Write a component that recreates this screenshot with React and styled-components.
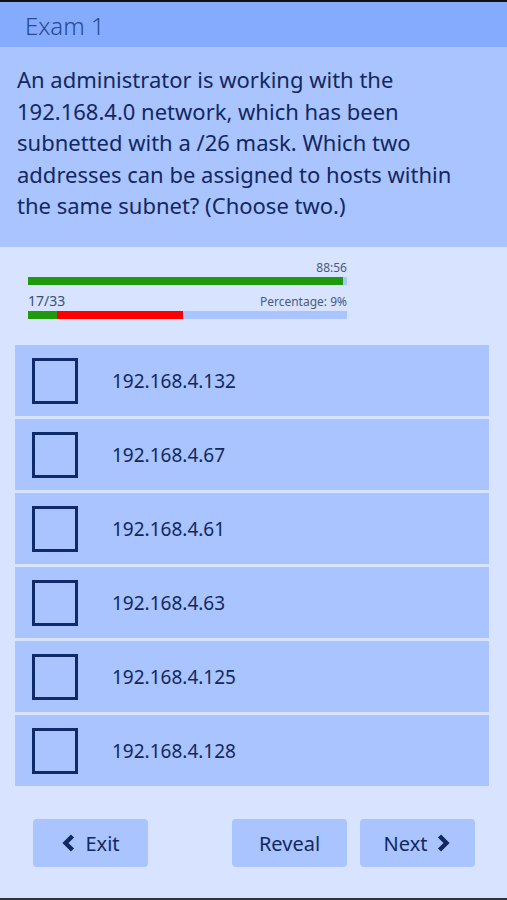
import React from "react";
import styled, { createGlobalStyle } from "styled-components";

const GlobalStyle = createGlobalStyle`
    html, body {
        margin: 0;
        padding: 0;
        background: #d8e4ff;
    }
    body {
        font-family: "Noto Sans", "Open Sans", sans-serif;
        color: #13285e;
    }
`;

const options = [
    "192.168.4.132",
    "192.168.4.67",
    "192.168.4.61",
    "192.168.4.63",
    "192.168.4.125",
    "192.168.4.128",
];

const Chevron = ({ dir }) => (
    <svg width="15" height="20" viewBox="0 0 15 20">
        {dir === "left" ? (
            <path d="M11.5 3 L4.5 10 L11.5 17" fill="none" stroke="#13285e" strokeWidth="4.4" strokeLinejoin="miter" />
        ) : (
            <path d="M3.5 3 L10.5 10 L3.5 17" fill="none" stroke="#13285e" strokeWidth="4.4" strokeLinejoin="miter" />
        )}
    </svg>
);

const App = () => {
    return (
        <Page>
            <GlobalStyle />
            <Header>Exam 1</Header>
            <Question>
                An administrator is working with the 192.168.4.0 network, which has been
                subnetted with a /26 mask. Which two addresses can be assigned to hosts
                within the same subnet? (Choose two.)
            </Question>
            <Progress>
                <Label align="right">88:56</Label>
                <Bar>
                    <Fill color="#1f9a0c" style={{ width: "98.8%" }} />
                </Bar>
                <LabelRow>
                    <Count>17/33</Count>
                    <Label>Percentage: 9%</Label>
                </LabelRow>
                <Bar>
                    <Fill color="#1f9a0c" style={{ width: "9%" }} />
                    <Fill color="#ff0000" style={{ width: "39.5%" }} />
                </Bar>
            </Progress>
            <Options>
                {options.map((o, i) => (
                    <Option key={i}>
                        <Box />
                        <span>{o}</span>
                    </Option>
                ))}
            </Options>
            <Footer>
                <Button>
                    <Chevron dir="left" />
                    Exit
                </Button>
                <Spacer />
                <Button>Reveal</Button>
                <Button>
                    Next
                    <Chevron dir="right" />
                </Button>
            </Footer>
        </Page>
    );
};

const Page = styled.div`
    width: 507px;
    height: 900px;
    box-sizing: border-box;
    border-top: 2px solid #111;
    border-bottom: 2px solid #333;
    background: #d8e4ff;
    display: flex;
    flex-direction: column;
    overflow: hidden;
`;

const Header = styled.div`
    height: 45px;
    flex-shrink: 0;
    background: #85abff;
    padding: 2px 0 0 25px;
    box-sizing: border-box;
    display: flex;
    align-items: center;
    font-size: 24px;
    color: #2a4a8c;
    font-weight: 300;
`;

const Question = styled.div`
    background: #a9c4ff;
    padding: 17px 24px 24px 17px;
    font-size: 22px;
    line-height: 31.6px;
    color: #13285e;
    height: 200px;
    flex-shrink: 0;
    box-sizing: border-box;
`;

const Progress = styled.div`
    width: 319px;
    margin: 13px 0 0 28px;
    display: flex;
    flex-direction: column;
`;

const Label = styled.div`
    font-size: 12px;
    color: #4a5a7a;
    text-align: ${(p) => p.align || "left"};
    line-height: 16px;
`;

const LabelRow = styled.div`
    display: flex;
    justify-content: space-between;
    align-items: flex-end;
    margin-top: 7px;
`;

const Count = styled.div`
    font-size: 14px;
    color: #3b4e78;
    line-height: 18px;
`;

const Bar = styled.div`
    height: 8px;
    background: #a9c4ff;
    display: flex;
    margin-top: 1px;
`;

const Fill = styled.div`
    height: 100%;
    background: ${(p) => p.color};
`;

const Options = styled.div`
    margin: 26px 18px 0 15px;
    display: flex;
    flex-direction: column;
    gap: 3px;
`;

const Option = styled.div`
    height: 71px;
    background: #a9c4ff;
    display: flex;
    align-items: center;
    padding-left: 17px;
    font-size: 19px;
    color: #13285e;
    span {
        margin-left: 34px;
    }
`;

const Box = styled.div`
    width: 46px;
    height: 46px;
    box-sizing: border-box;
    border: 3px solid #0e2a6b;
`;

const Footer = styled.div`
    display: flex;
    margin: 33px 32px 0 33px;
    gap: 13px;
`;

const Spacer = styled.div`
    flex: 1;
`;

const Button = styled.div`
    width: 115px;
    height: 48px;
    border-radius: 4px;
    background: #a9c4ff;
    display: flex;
    align-items: center;
    justify-content: center;
    gap: 9px;
    font-size: 20px;
    color: #13285e;
`;

export default App;
